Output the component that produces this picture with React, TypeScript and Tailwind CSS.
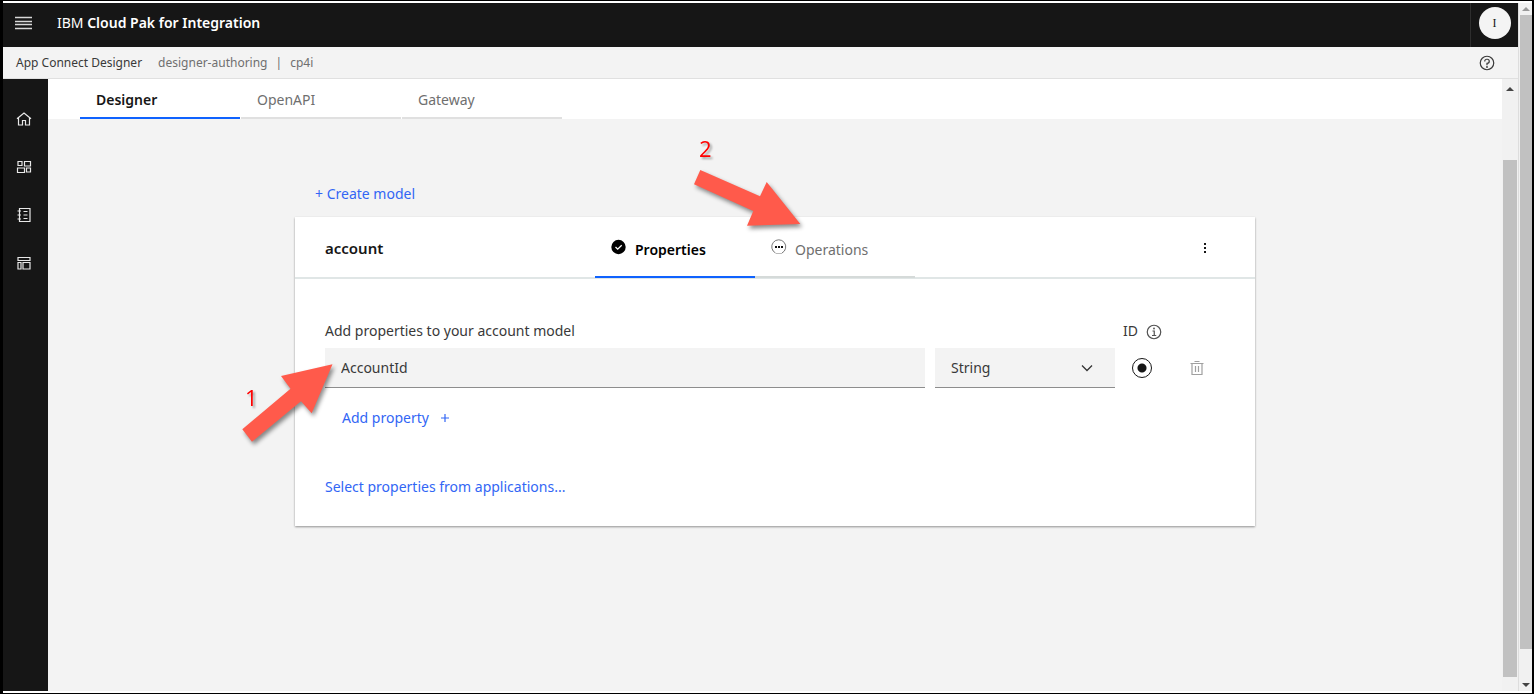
import type { ReactNode } from "react";

function Icon({ children, className = "w-4 h-4" }: { children: ReactNode; className?: string }) {
  return (
    <svg viewBox="0 0 32 32" fill="none" stroke="currentColor" strokeWidth="2.400" className={className} aria-hidden="true">
      {children}
    </svg>
  );
}

function HomeIcon() {
  return (
    <Icon>
      <path d="M2 15.500 16 4l14 11.500M5 13.500V28h8v-9h6v9h8V13.500" />
    </Icon>
  );
}

function DashboardIcon() {
  return (
    <Icon>
      <path d="M4 5h8v8H4zM17 5h12v9H17zM3 18h14v9H3zM21 18h8v8h-8z" />
    </Icon>
  );
}

function CatalogIcon() {
  return (
    <Icon>
      <path d="M7 3h21v26H7zM3 8h7M3 16h7M3 24h7M15 9h8M15 16h8M15 23h8" />
    </Icon>
  );
}

function TemplateIcon() {
  return (
    <Icon>
      <path d="M4 5h24v6H4zM4 15h6v13H4zM14 15h14v13H14z" />
    </Icon>
  );
}

const navItems = [
  { label: "Home", icon: <HomeIcon /> },
  { label: "Dashboard", icon: <DashboardIcon /> },
  { label: "Catalog", icon: <CatalogIcon /> },
  { label: "Templates", icon: <TemplateIcon /> },
];

function Header() {
  return (
    <header className="flex h-11 shrink-0 items-center bg-[#161616] pb-1 text-white">
      <button aria-label="Menu" className="flex h-full w-12 items-center pl-3">
        <svg viewBox="0 0 18 14" className="h-3.5 w-[18px]" stroke="#d8d8d8" strokeWidth="1.300" aria-hidden="true">
          <path d="M0 1.500h17M0 5.500h17M0 8.500h17M0 12.500h17" />
        </svg>
      </button>
      <h1 className="grow pl-1.5 text-sm">
        IBM <span className="font-semibold">Cloud Pak for Integration</span>
      </h1>
      <div className="-mb-1 flex h-11 w-12 items-center justify-center border-l border-[#2e2e2e] pb-1">
        <button aria-label="Account" className="h-8 w-8 rounded-full bg-[#f4f4f4] font-['Liberation_Serif',serif] text-xs text-[#161616]">
          I
        </button>
      </div>
    </header>
  );
}

function SubHeader() {
  return (
    <div className="flex h-8 shrink-0 items-center border-b border-[#e0e0e0] bg-[#f3f3f3] pl-[13px] pr-[23px] text-xs text-[#6f6f6f]">
      <a href="#designer" className="mr-4 text-[#393939]">App Connect Designer</a>
      <span>designer-authoring</span>
      <span className="mx-2">|</span>
      <span className="grow">cp4i</span>
      <button aria-label="Help" className="text-[#393939]">
        <Icon>
          <circle cx="16" cy="16" r="13.500" />
          <path d="M11.500 13v-.5a4 4 0 0 1 4-4h1a4 4 0 0 1 0 8H16v4" />
          <circle cx="16" cy="24" r="1.800" fill="currentColor" stroke="none" />
        </Icon>
      </button>
    </div>
  );
}

function Tabs() {
  return (
    <div role="tablist" className="flex h-10 shrink-0 gap-px bg-white pl-8 text-sm">
      <button role="tab" aria-selected="true" className="w-40 border-b-2 border-[#0f62fe] pl-4 pt-1 text-left font-semibold text-[#161616]">
        Designer
      </button>
      <button role="tab" aria-selected="false" className="w-40 border-b-2 border-[#e0e0e0] pl-4 pt-1 text-left text-[#6f6f6f]">
        OpenAPI
      </button>
      <button role="tab" aria-selected="false" className="w-40 border-b-2 border-[#e0e0e0] pl-4 pt-1 text-left text-[#6f6f6f]">
        Gateway
      </button>
    </div>
  );
}

function Callouts() {
  return (
    <div className="pointer-events-none absolute inset-x-0 -top-[98px] font-['Open_Sans',sans-serif] text-[22px] leading-8 text-[#f00]">
      <svg
        viewBox="0 0 960 410"
        className="absolute left-0 top-0 h-[410px] w-[960px] overflow-visible drop-shadow-[2px_3px_2px_rgba(0,0,0,0.45)]"
        fill="#ff5a4b"
        aria-hidden="true"
      >
        <path d="M37.500 245.300-14 257l9.500 12.700-48.200 40.600 9.700 12.400L6 282.300l10.700 12z" />
        <path d="M505.300 105 471.700 63 465 77.300 405.300 51 399 65.300 458.300 92 452 106.700z" />
      </svg>
      <span className="absolute left-[-50px] top-[262px] drop-shadow-[2px_2px_1px_rgba(0,0,0,0.35)]">1</span>
      <span className="absolute left-[404px] top-[13px] drop-shadow-[2px_2px_1px_rgba(0,0,0,0.35)]">2</span>
    </div>
  );
}

function ModelCard() {
  return (
    <section className="bg-white pb-[29px] shadow-[0_1px_2px_rgba(0,0,0,0.4)]">
      <div className="flex h-[62px] border-b-2 border-[#e0e6e6] pl-[30px]">
        <h2 className="flex w-[270px] items-center pt-0.5 text-[15px] font-semibold text-[#161616]">account</h2>
        <div role="tablist" className="flex h-[61px] grow text-sm">
          <button role="tab" aria-selected="true" className="flex w-40 items-center gap-2 border-b-2 border-[#0f62fe] pl-4 pt-1.5 font-semibold text-black">
            <svg viewBox="0 0 16 16" className="mb-1.5 h-4 w-4" aria-hidden="true">
              <circle cx="7.500" cy="8" r="7.200" fill="#000" />
              <path d="m4.500 8 2.200 2.200 4-4" fill="none" stroke="#fff" strokeWidth="1.300" />
            </svg>
            Properties
          </button>
          <button role="tab" aria-selected="false" className="flex w-40 items-center gap-2 border-b-2 border-[#d5dad9] pl-4 pt-1.5 text-[#6f6f6f]">
            <svg viewBox="0 0 16 16" className="mb-1.5 h-4 w-4" aria-hidden="true">
              <path d="M4.500 14A7 7 0 1 1 11 14" fill="none" stroke="#777" />
              <path d="M5 14.500h6" stroke="#999" strokeWidth=".7" />
              <path d="M4 7h2v2H4zM7 7h2v2H7zM10 7h2v2h-2z" fill="#111" />
            </svg>
            Operations
          </button>
        </div>
        <button aria-label="More options" className="mr-10 flex w-5 items-center justify-center pt-0.5">
          <svg viewBox="0 0 2 12" className="h-3 w-0.5" fill="#161616" aria-hidden="true">
            <path d="M0 1h2v2H0zM0 5h2v2H0zM0 9h2v2H0z" />
          </svg>
        </button>
      </div>
      <div className="px-[30px] pt-[42px] text-sm text-[#393939]">
        <div className="flex h-[27px] items-start">
          <label htmlFor="property-name" className="w-[798px]">Add properties to your account model</label>
          <label htmlFor="property-id">ID</label>
          <button aria-label="About IDs" className="ml-2 mt-[3px] text-[#525252]">
            <Icon>
              <circle cx="16" cy="16" r="13.500" />
              <path d="M13 14h3.500v9M12 23h8.500" />
              <circle cx="16" cy="9" r="1.800" fill="currentColor" stroke="none" />
            </Icon>
          </button>
        </div>
        <div className="flex h-10 items-center">
          <input
            id="property-name"
            defaultValue="AccountId"
            className="h-10 w-[600px] border-b border-[#8d8d8d] bg-[#f3f3f3] px-4 outline-none"
          />
          <div className="relative ml-2.5 h-10 w-[180px]">
            <select aria-label="Type" className="h-10 w-full appearance-none border-b border-[#8d8d8d] bg-[#f3f3f3] px-4 outline-none">
              <option>String</option>
            </select>
            <svg viewBox="0 0 12 8" className="pointer-events-none absolute right-[22px] top-4 h-2 w-3" fill="none" stroke="#333" strokeWidth="1.300" aria-hidden="true">
              <path d="m1 1.500 5 5 5-5" />
            </svg>
          </div>
          <input
            id="property-id"
            type="radio"
            defaultChecked
            className="ml-[17px] h-5 w-5 appearance-none rounded-full border border-[#161616] bg-[radial-gradient(circle,#161616_4px,transparent_5px)]"
          />
          <button aria-label="Delete property" className="ml-[37px] text-[#a0a0a0]">
            <Icon>
              <path d="M3 7h26M6 7v22h20V7M11 3h10M13 12v12M19 12v12" />
            </Icon>
          </button>
        </div>
        <button className="ml-[17px] mt-5 flex items-center gap-3 text-[#3266f5]">
          Add property
          <svg viewBox="0 0 8 8" className="h-2 w-2" stroke="currentColor" strokeWidth="1.200" aria-hidden="true">
            <path d="M4 0v8M0 4h8" />
          </svg>
        </button>
        <a href="#applications" className="mt-[49px] block text-[#3266f5]">Select properties from applications...</a>
      </div>
    </section>
  );
}

export default function App() {
  return (
    <div className="flex h-screen border-y border-r-2 border-l-[3px] border-black bg-white py-0.5 font-['Noto_Sans',sans-serif]">
      <div className="flex min-w-0 grow flex-col">
        <Header />
        <SubHeader />
        <div className="flex min-h-0 grow">
          <nav className="w-[45px] shrink-0 bg-[#161616] pl-[13px] pt-8 text-[#e8e8e8]">
            <ul className="flex flex-col gap-8">
              {navItems.map((item) => (
                <li key={item.label} className="h-4">
                  <button aria-label={item.label} className="block">{item.icon}</button>
                </li>
              ))}
            </ul>
          </nav>
          <main className="flex min-w-0 grow flex-col bg-[#f3f3f3]">
            <Tabs />
            <div className="mx-auto w-full max-w-[960px] pt-16">
              <button className="block h-[34px] pb-3 pl-5 text-sm text-[#3266f5]">+ Create model</button>
              <div className="relative">
                <ModelCard />
                <Callouts />
              </div>
            </div>
          </main>
          <div className="flex w-4 shrink-0 flex-col items-center bg-[#f1f1f1] pb-3.5 pt-2">
            <svg viewBox="0 0 8 4" className="h-1 w-2" fill="#444" aria-hidden="true">
              <path d="M0 4 4 0l4 4z" />
            </svg>
            <div className="mt-[69px] w-3.5 grow bg-[#c1c1c1]" />
          </div>
        </div>
      </div>
      <div className="flex w-3.5 shrink-0 flex-col items-center border-l border-[#ddd] bg-[#f1f1f1] pt-1">
        <svg viewBox="0 0 8 4" className="h-1 w-2" fill="#999" aria-hidden="true">
          <path d="M0 4 4 0l4 4z" />
        </svg>
        <div className="mb-[34px] mt-1 w-3 grow bg-[#c1c1c1]" />
        <svg viewBox="0 0 8 4" className="mb-1 h-1 w-2" fill="#444" aria-hidden="true">
          <path d="M0 0h8L4 4z" />
        </svg>
      </div>
    </div>
  );
}
